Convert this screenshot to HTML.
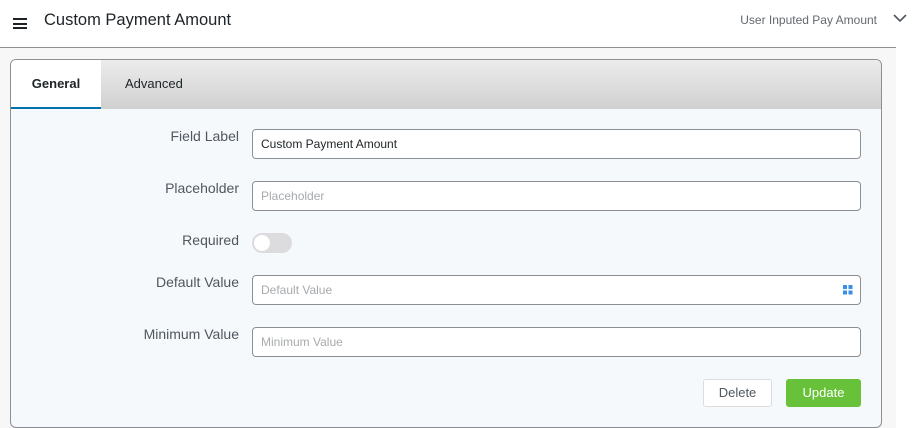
<!DOCTYPE html>
<html><head><style>
*{box-sizing:border-box;margin:0;padding:0}
body{width:919px;height:428px;background:#fff;font-family:"Liberation Sans",sans-serif;position:relative;overflow:hidden}
.top{position:absolute;left:0;top:0;width:896px;height:48px;border-bottom:1px solid #8c8f94}
.bg{position:absolute;left:0;top:48px;width:896px;height:380px;background:#f7f7f7}
.title{position:absolute;left:44px;top:11px;font-size:16.5px;color:#1d2327}
.ham{position:absolute;left:13px;top:18px;width:14px}
.ham i{display:block;height:2px;background:#1d2327;margin-bottom:2.5px}
.sub{position:absolute;right:42px;top:13px;font-size:12px;color:#646970}
.chev{position:absolute;left:893px;top:11px}
.card{position:absolute;left:10px;top:59px;width:872px;height:369px;border:1px solid #8c8f94;border-radius:6px;background:#f5f9fc;overflow:hidden}
.tabs{height:49px;background:linear-gradient(#ececec,#d0d0d0);position:relative}
.tab{position:absolute;top:0;height:49px;line-height:48px;font-size:13px;color:#1d2327}
.t1{left:0;width:90px;background:#fff;text-align:center;font-weight:bold;border-bottom:2px solid #0073aa}
.t2{left:114px}
.lab{position:absolute;right:642px;font-size:14px;color:#50575e;text-align:right;white-space:nowrap}
.inp{position:absolute;left:241px;width:609px;height:30px;border:1px solid #8c8f94;border-radius:4px;background:#fff;font-size:12px;padding-left:8px;line-height:28px;color:#a7aaad}
.tog{position:absolute;left:241px;top:173px;width:40px;height:20px;border-radius:10px;background:#dcdcde}
.tog i{position:absolute;left:2px;top:2px;width:16px;height:16px;border-radius:50%;background:#fff}
.btn{position:absolute;top:319px;height:28px;line-height:26px;font-size:13px;text-align:center;border-radius:3px}
</style></head><body>
<div class="top"></div><div class="bg"></div>
<div class="ham"><i></i><i></i><i></i></div>
<div class="title">Custom Payment Amount</div>
<div class="sub">User Inputed Pay Amount</div>
<svg class="chev" width="14" height="14" viewBox="0 0 14 14"><path d="M1 4l6 6 6-6" fill="none" stroke="#50575e" stroke-width="1.6"/></svg>
<div class="card">
<div class="tabs"><div class="tab t1">General</div><div class="tab t2">Advanced</div></div>
<div class="lab" style="top:68px">Field Label</div>
<div class="inp" style="top:69px;color:#1d2327">Custom Payment Amount</div>
<div class="lab" style="top:120px">Placeholder</div>
<div class="inp" style="top:121px">Placeholder</div>
<div class="lab" style="top:172px">Required</div>
<div class="tog"><i></i></div>
<div class="lab" style="top:214px">Default Value</div>
<div class="inp" style="top:215px">Default Value
<svg style="position:absolute;right:7px;top:9px" width="10" height="10"><rect x="0" y="0" width="4" height="4" fill="#3b8fe8"/><rect x="5.5" y="0" width="4" height="4" fill="#3b8fe8"/><rect x="0" y="5.5" width="4" height="4" fill="#3b8fe8"/><rect x="5.5" y="5.5" width="4" height="4" fill="#3b8fe8"/></svg></div>
<div class="lab" style="top:266px">Minimum Value</div>
<div class="inp" style="top:267px">Minimum Value</div>
<div class="btn" style="left:692px;width:69px;border:1px solid #dcdcde;background:#fff;color:#50575e">Delete</div>
<div class="btn" style="left:775px;width:75px;background:#67c23a;color:#fff;border:1px solid #67c23a">Update</div>
</div>
</body></html>
